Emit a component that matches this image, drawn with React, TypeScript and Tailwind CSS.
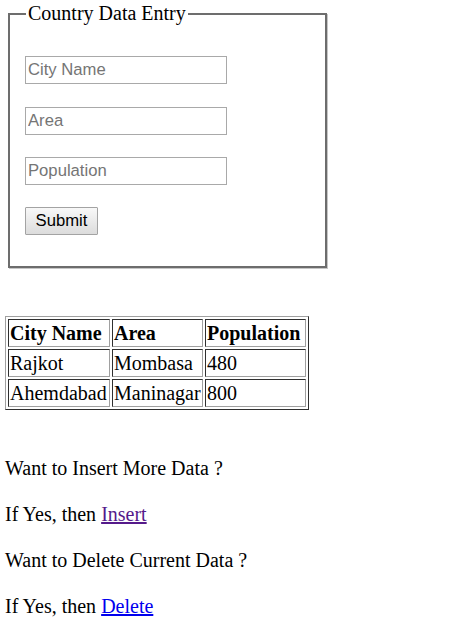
import React from "react";

export default function App() {
  const cellB =
    "border border-t-[#303030] border-l-[#303030] border-r-[#a0a0a0] border-b-[#a0a0a0] p-[1px] leading-[24px] text-left align-middle whitespace-nowrap";
  const inputC =
    "ml-[15px] w-[202px] h-[28px] border border-[#a9a9a9] px-[2px] bg-white text-[16.67px] font-['Liberation_Sans',Arial,sans-serif] placeholder:text-[#757575] outline-none";
  return (
    <div className="w-[452px] min-h-[632px] bg-white text-black font-['Liberation_Serif','Times_New_Roman',serif] text-[20px] overflow-hidden">
      <fieldset className="ml-[8px] mt-[2px] w-[319px] border-2 border-solid border-[#6d6d6d] shadow-[1px_1px_0_#c6c6c6] p-0 pb-[31px] flex flex-col items-start">
        <legend className="ml-[16px] px-[2px] leading-[23px] text-[20px]">Country Data Entry</legend>
        <input type="text" placeholder="City Name" className={inputC + " mt-[31px]"} />
        <input type="text" placeholder="Area" className={inputC + " mt-[23px]"} />
        <input type="text" placeholder="Population" className={inputC + " mt-[22px]"} />
        <button
          type="button"
          className="ml-[15px] mt-[22px] w-[73px] h-[28px] border border-[#a3a3a3] rounded-[1px] bg-gradient-to-b from-[#f8f8f8] to-[#dcdcdc] text-[16.67px] font-['Liberation_Sans',Arial,sans-serif] text-black leading-none"
        >
          Submit
        </button>
      </fieldset>

      <table className="ml-[5px] mt-[48px] border-separate border-spacing-[2px] border border-t-[#a0a0a0] border-l-[#a0a0a0] border-r-[#303030] border-b-[#303030]">
        <tbody>
          <tr>
            <th className={cellB + " font-bold w-[102px]"}>City Name</th>
            <th className={cellB + " font-bold w-[91px]"}>Area</th>
            <th className={cellB + " font-bold w-[101px]"}>Population</th>
          </tr>
          <tr>
            <td className={cellB}>Rajkot</td>
            <td className={cellB}>Mombasa</td>
            <td className={cellB}>480</td>
          </tr>
          <tr>
            <td className={cellB}>Ahemdabad</td>
            <td className={cellB}>Maninagar</td>
            <td className={cellB}>800</td>
          </tr>
        </tbody>
      </table>

      <div className="pl-[5px] flex flex-col">
        <p className="mt-[47px] leading-[23px]">Want to Insert More Data ?</p>
        <p className="mt-[23px] leading-[23px]">
          If Yes, then{" "}
          <a href="#insert" className="text-[#551a8b] underline">
            Insert
          </a>
        </p>
        <p className="mt-[23px] leading-[23px]">Want to Delete Current Data ?</p>
        <p className="mt-[23px] leading-[23px]">
          If Yes, then{" "}
          <a href="#delete" className="text-[#0000ee] underline">
            Delete
          </a>
        </p>
      </div>
    </div>
  );
}
